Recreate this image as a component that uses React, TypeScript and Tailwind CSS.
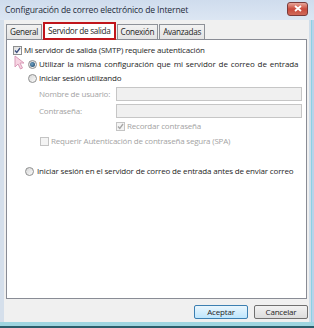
import React from 'react';

function CheckBox({ checked, disabled }: { checked?: boolean; disabled?: boolean }) {
  return (
    <div
      className={`w-[9px] h-[9px] shrink-0 border flex items-center justify-center ${
        disabled ? 'border-[#c4c4c4] bg-[#f4f4f4]' : 'border-[#8e8f8f] bg-gradient-to-br from-[#dcdcdc] to-[#ffffff]'
      }`}
    >
      {checked && (
        <svg width="7" height="7" viewBox="0 0 7 7">
          <path
            d="M1 3.5 L2.8 5.5 L6 1"
            fill="none"
            stroke={disabled ? '#a6a6a6' : '#3c4f7f'}
            strokeWidth="1.3"
          />
        </svg>
      )}
    </div>
  );
}

function Radio({ checked }: { checked?: boolean }) {
  return (
    <div className="w-[9px] h-[9px] shrink-0 rounded-full border border-[#8e8f8f] bg-gradient-to-br from-[#d6d6d6] to-[#fbfbfb] flex items-center justify-center">
      {checked && <div className="w-[5px] h-[5px] rounded-full bg-[radial-gradient(circle_at_40%_40%,#6fa3c7,#153a5a)]" />}
    </div>
  );
}

function Tab({ label, active }: { label: string; active?: boolean }) {
  if (active) {
    return (
      <div className="h-[18px] -mb-[1px] px-[3px] pt-[1px] border-2 border-[#c0151b] bg-white flex items-start">
        <span className="text-[8.2px] tracking-[-0.3px] leading-[12px] text-[#1e1e1e]">{label}</span>
      </div>
    );
  }
  return (
    <div className="h-[15px] border border-b-0 border-[#8d9198] bg-gradient-to-b from-[#f2f2f2] to-[#e3e3e3] px-[3px] flex items-center">
      <span className="text-[8.2px] tracking-[-0.3px] leading-[12px] text-[#1e1e1e]">{label}</span>
    </div>
  );
}

export default function App() {
  return (
    <div className="w-[314px] h-[328px] overflow-hidden flex flex-col bg-[#dce6f2] font-['Open_Sans',sans-serif] text-[#1e1e1e]">
      {/* title bar */}
      <div className="h-[20px] shrink-0 flex items-center justify-between pl-[5px] pr-[6px] bg-gradient-to-b from-[#cfdced] to-[#dce6f3]">
        <span className="text-[8.6px] tracking-[-0.15px] leading-[12px] text-[#1f2b3a]">
          Configuración de correo electrónico de Internet
        </span>
        <div className="w-[21px] h-[14px] -mt-[3px] rounded-[3px] border border-[#7a3a3a] bg-gradient-to-b from-[#e7a59a] via-[#c8493c] to-[#d06a5a] flex items-center justify-center">
          <svg width="8" height="7" viewBox="0 0 8 7">
            <path d="M1 1 L7 6 M7 1 L1 6" stroke="#ffffff" strokeWidth="1.8" />
          </svg>
        </div>
      </div>

      <div className="flex-1 flex">
        <div className="w-[4px] bg-[#d5dfeb]" />
        <div className="flex-1 bg-[#f0f0f0] flex flex-col">
          {/* tabs */}
          <div className="h-[18px] mt-[1px] flex items-end gap-[1px] pl-[2px] relative z-10">
            <Tab label="General" />
            <Tab label="Servidor de salida" active />
            <Tab label="Conexión" />
            <Tab label="Avanzadas" />
          </div>

          {/* panel */}
          <div className="ml-[2px] w-[301px] h-[260px] border border-[#898c95] bg-white flex flex-col text-[8px] tracking-[-0.2px] leading-[12px] whitespace-nowrap relative">
            <div className="mt-[3px] h-[14px] pl-[6px] flex items-center gap-[2px]">
              <CheckBox checked />
              <span>Mi servidor de salida (SMTP) requiere autenticación</span>
            </div>
            <div className="h-[14px] pl-[21px] flex items-center gap-[2px]">
              <Radio checked />
              <span className="tracking-[-0.1px] [word-spacing:1px]">Utilizar la misma configuración que mi servidor de correo de entrada</span>
            </div>
            <div className="h-[14px] pl-[21px] flex items-center gap-[2px]">
              <Radio />
              <span>Iniciar sesión utilizando</span>
            </div>
            <div className="mt-[2px] h-[14px] pl-[32px] pr-[4px] flex items-center">
              <span className="w-[77px] text-[#a3a3a3]">Nombre de usuario:</span>
              <div className="flex-1 h-[14px] border border-[#c6c6c6] bg-[#f0f0f0]" />
            </div>
            <div className="mt-[3px] h-[14px] pl-[32px] pr-[4px] flex items-center">
              <span className="w-[77px] text-[#a3a3a3]">Contraseña:</span>
              <div className="flex-1 h-[14px] border border-[#c6c6c6] bg-[#f0f0f0]" />
            </div>
            <div className="mt-[1px] h-[14px] pl-[109px] flex items-center gap-[2px]">
              <CheckBox checked disabled />
              <span className="text-[#a3a3a3]">Recordar contraseña</span>
            </div>
            <div className="mt-[1px] h-[14px] pl-[33px] flex items-center gap-[2px]">
              <CheckBox disabled />
              <span className="text-[#a3a3a3]">Requerir Autenticación de contraseña segura (SPA)</span>
            </div>
            <div className="mt-[16px] h-[14px] pl-[18px] flex items-center gap-[3px]">
              <Radio />
              <span className="tracking-[-0.16px]">Iniciar sesión en el servidor de correo de entrada antes de enviar correo</span>
            </div>

            {/* mouse cursor */}
            <svg className="absolute left-[7px] top-[15px] opacity-60" width="13" height="15" viewBox="0 0 13 15">
              <path d="M1 1 L1 12 L4 9 L6.5 14 L8.5 13 L6 8 L10 8 Z" fill="#f2b8d0" stroke="#c25a8a" strokeWidth="1" />
            </svg>
          </div>

          {/* buttons */}
          <div className="mt-[6px] flex justify-end gap-[6px] pr-[1px]">
            <button className="w-[54px] h-[14px] rounded-[2px] border border-[#3c7fb1] bg-gradient-to-b from-[#eaf6fd] to-[#bee6fd] text-[8px] tracking-[-0.2px] leading-[12px] text-[#1e1e1e]">
              Aceptar
            </button>
            <button className="w-[54px] h-[14px] rounded-[2px] border border-[#707070] bg-gradient-to-b from-[#f2f2f2] to-[#dddddd] text-[8px] tracking-[-0.2px] leading-[12px] text-[#1e1e1e]">
              Cancelar
            </button>
          </div>
          <div className="flex-1" />
        </div>
        <div className="w-[5px] flex">
          <div className="w-[2px] bg-[#cfdde9]" />
          <div className="w-[1px] bg-[#8fd0e4]" />
          <div className="w-[2px] bg-[#b9d3ea]" />
        </div>
      </div>

      {/* bottom edge */}
      <div className="h-[4px] shrink-0 bg-[#9ed5e0]" />
      <div className="h-[2px] shrink-0 bg-[#2b5d6b]" />
    </div>
  );
}
